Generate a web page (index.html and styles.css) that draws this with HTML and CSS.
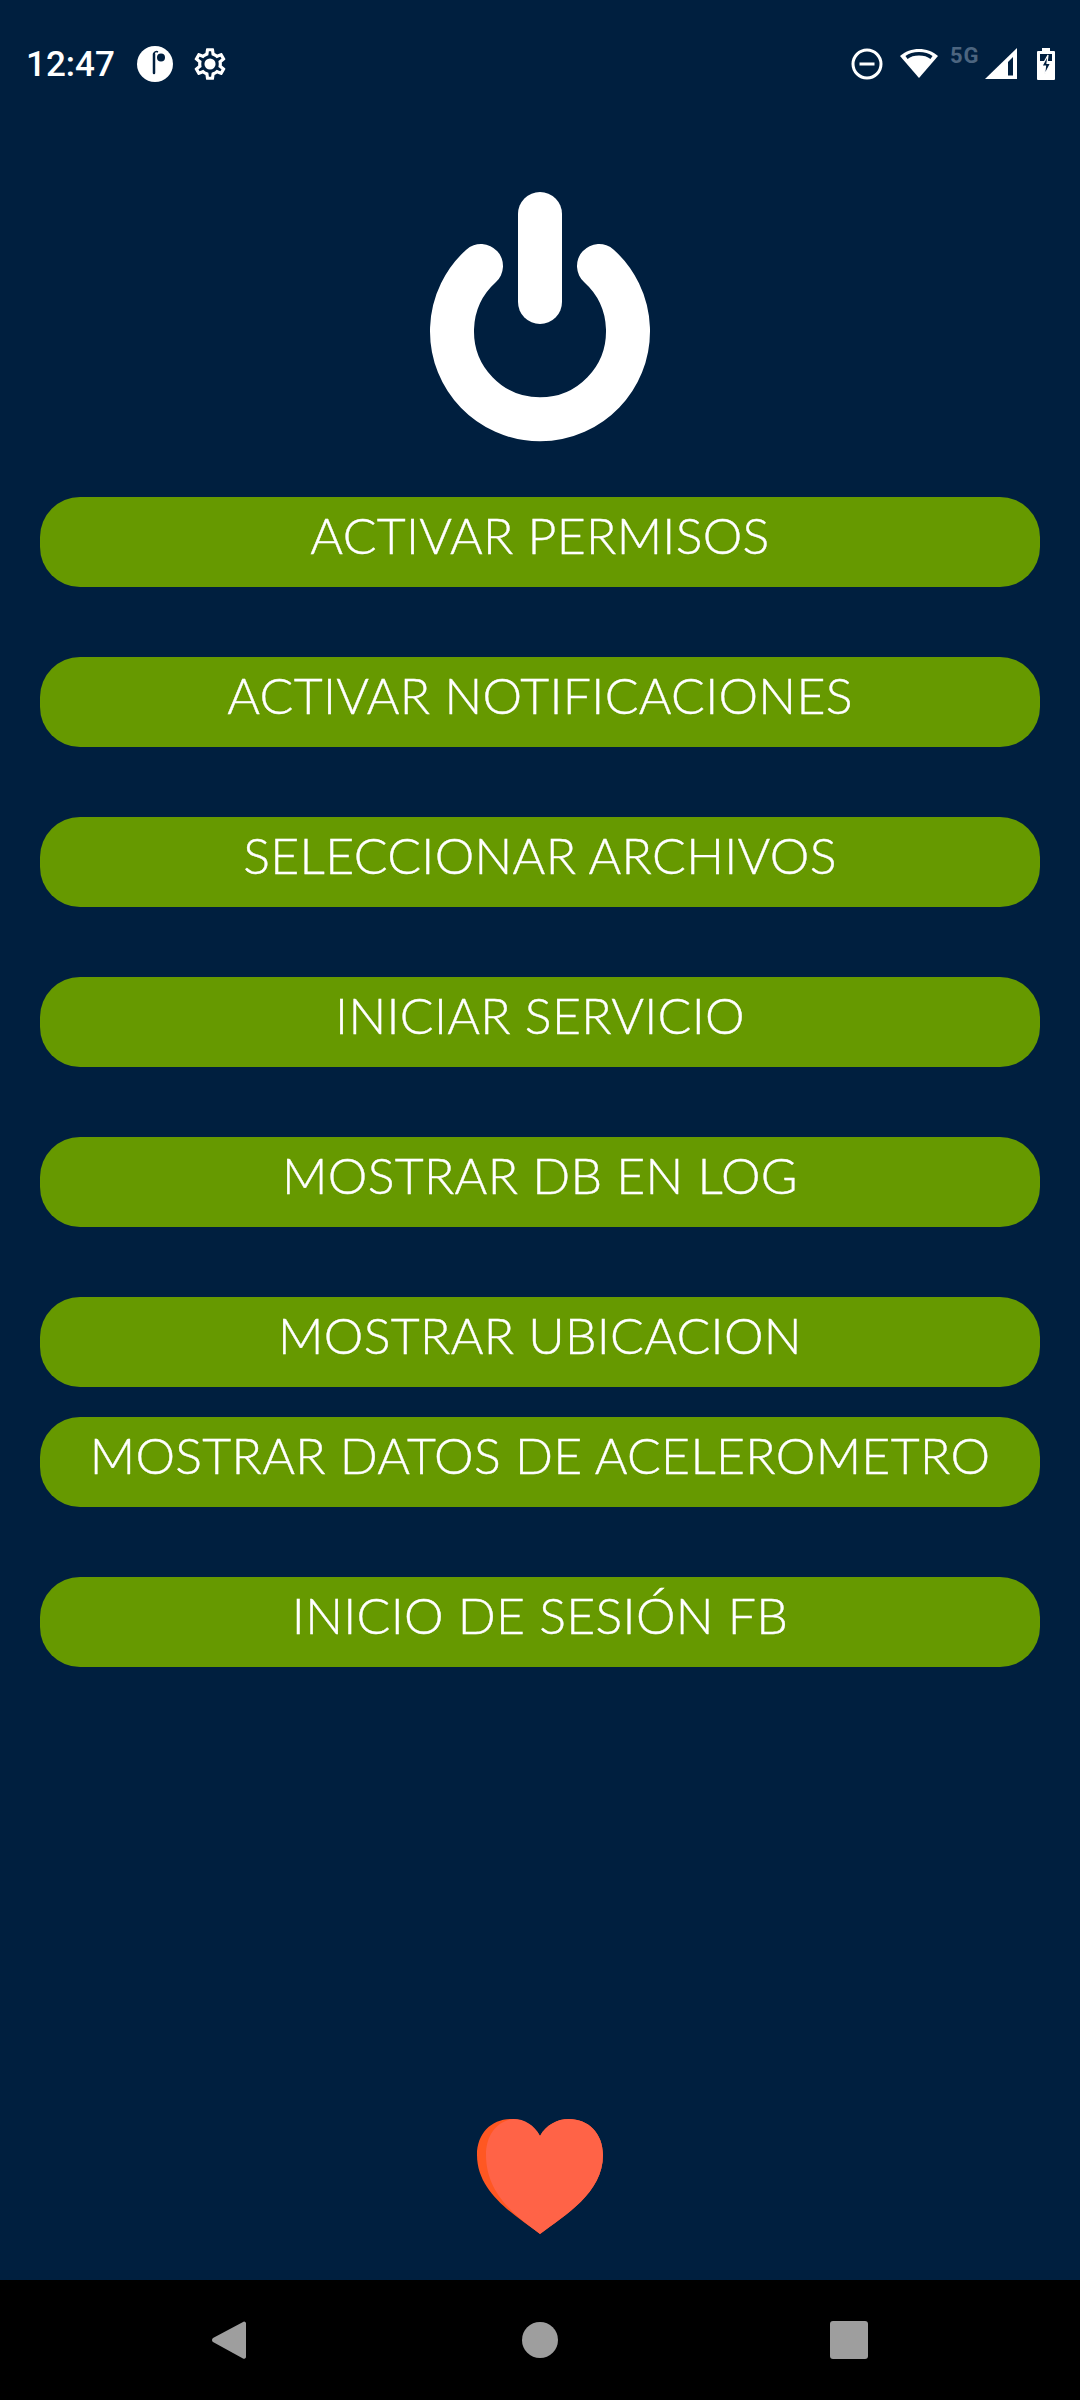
FILE: index.html
```html
<!DOCTYPE html>
<html lang="es">
<head>
  <meta charset="UTF-8" />
  <title>Inicio</title>
  <link rel="stylesheet" href="styles.css">
</head>
<body>
  <div class="pantalla">
    <div class="status-bar">
      <span class="hora">12:47</span>
      <svg class="ic-app" width="36" height="36" viewBox="0 0 36 36">
        <circle cx="18" cy="18" r="18" fill="#fff"/>
        <path d="M17 8V27" stroke="#001f3f" stroke-width="2.500" stroke-linecap="round" fill="none"/>
        <path d="M17 8C17 6 19 5 21 6" stroke="#001f3f" stroke-width="1.500" fill="none"/>
        <circle cx="24" cy="11.500" r="4" fill="#001f3f"/>
      </svg>
      <svg class="ic-gear" width="38" height="38" viewBox="0 0 24 24">
        <path d="M19.430 12.980c.04-.32.07-.64.07-.98 0-.34-.03-.66-.07-.98l2.110-1.650c.19-.15.24-.42.12-.64l-2-3.460c-.09-.16-.26-.25-.44-.25-.06 0-.12.01-.17.03l-2.490 1c-.52-.4-1.080-.73-1.690-.98l-.38-2.650C14.460 2.180 14.250 2 14 2h-4c-.25 0-.46.18-.49.42l-.38 2.650c-.61.25-1.170.59-1.690.98l-2.490-1c-.06-.02-.12-.03-.18-.03-.17 0-.34.09-.43.25l-2 3.460c-.13.22-.07.49.12.64l2.110 1.650c-.04.32-.07.65-.07.98 0 .33.03.66.07.98l-2.110 1.650c-.19.15-.24.42-.12.64l2 3.460c.09.16.26.25.44.25.06 0 .12-.01.17-.03l2.490-1c.52.4 1.080.73 1.690.98l.38 2.650c.03.24.24.42.49.42h4c.25 0 .46-.18.49-.42l.38-2.650c.61-.25 1.170-.59 1.690-.98l2.490 1c.06.02.12.03.18.03.17 0 .34-.09.43-.25l2-3.460c.12-.22.07-.49-.12-.64l-2.110-1.650zm-1.980-1.710c.04.31.05.52.05.73 0 .21-.02.43-.05.73l-.14 1.130.89.7 1.080.84-.7 1.210-1.270-.51-1.040-.42-.9.68c-.43.32-.84.56-1.250.73l-1.060.43-.16 1.130-.2 1.350h-1.400l-.19-1.350-.16-1.130-1.060-.43c-.43-.18-.83-.41-1.230-.71l-.91-.7-1.060.43-1.270.51-.7-1.210 1.080-.84.89-.7-.14-1.130c-.03-.31-.05-.54-.05-.74s.02-.43.05-.73l.14-1.130-.89-.7-1.080-.84.7-1.210 1.270.51 1.040.42.9-.68c.43-.32.84-.56 1.250-.73l1.060-.43.16-1.130.2-1.350h1.390l.19 1.350.16 1.130 1.060.43c.43.18.83.41 1.230.71l.91.7 1.060-.43 1.270-.51.7 1.210-1.070.85-.89.7.14 1.130z" fill="#fff"/>
        <circle cx="12" cy="12" r="3.500" fill="#fff"/>
      </svg>
      <div class="status-der">
        <svg width="32" height="32" viewBox="0 0 32 32">
          <circle cx="16" cy="16" r="14" fill="none" stroke="#fff" stroke-width="3"/>
          <rect x="8.500" y="14.500" width="15" height="3" fill="#fff"/>
        </svg>
        <svg class="ic-wifi" width="38" height="32" viewBox="0 0 38 32">
          <path d="M19 31 0 9C10-.5 28-.5 38 9z" fill="#fff"/>
          <path d="M6.500 10.500C13 5.500 25 5.500 31.500 10.500" fill="none" stroke="#001f3f" stroke-width="3.500"/>
        </svg>
        <span class="red">5G</span>
        <svg class="ic-senal" width="32" height="32" viewBox="0 0 32 32">
          <path d="M0 31 32 0v31z" fill="#fff"/>
          <path d="M23 14 28 9V27.500H23z" fill="#001f3f"/>
        </svg>
        <svg class="ic-bateria" width="18" height="32" viewBox="0 0 18 32">
          <path d="M5 0h8v3h4a1 1 0 0 1 1 1v27a1 1 0 0 1-1 1H1a1 1 0 0 1-1-1V4a1 1 0 0 1 1-1h4z" fill="#fff"/>
          <rect x="3" y="6" width="12" height="7" fill="#001f3f"/>
          <path d="M11 7 5 18h3.500L7.500 27 13.500 15.500H10z" fill="#001f3f" stroke="#fff" stroke-width="1.200"/>
        </svg>
      </div>
    </div>

    <div class="contenido">
      <svg class="ic-power" width="224" height="252" viewBox="0 0 224 252">
        <path d="M53 74a88 88 0 1 0 118 0" fill="none" stroke="#fff" stroke-width="44" stroke-linecap="round"/>
        <path d="M112 22v88" fill="none" stroke="#fff" stroke-width="44" stroke-linecap="round"/>
      </svg>

      <div class="botones">
        <button class="boton">ACTIVAR PERMISOS</button>
        <button class="boton">ACTIVAR NOTIFICACIONES</button>
        <button class="boton">SELECCIONAR ARCHIVOS</button>
        <button class="boton">INICIAR SERVICIO</button>
        <button class="boton">MOSTRAR DB EN LOG</button>
        <button class="boton">MOSTRAR UBICACION</button>
        <button class="boton boton-pegado">MOSTRAR DATOS DE ACELEROMETRO</button>
        <button class="boton">INICIO DE SESIÓN FB</button>
      </div>

      <svg class="ic-corazon" width="126" height="115" viewBox="0 0 126 115">
        <path d="M63 115C38 96 0 74 0 36 0 14 15 0 34 0c12 0 23 6 29 17C69 6 80 0 92 0c19 0 34 14 34 36 0 38-38 60-63 79z" fill="#ff5722"/>
        <path d="M63 115C44 100 9 78 9 36 9 16 20 2 36 0c12 0 21 6 27 17C69 6 80 0 92 0c19 0 34 14 34 36 0 38-38 60-63 79z" fill="#ff6347"/>
      </svg>
    </div>

    <div class="nav-bar">
      <svg width="36" height="40" viewBox="0 0 36 40">
        <path d="M33 1.500a2 2 0 0 1 2 1.500v34a2 2 0 0 1-3 1.500L2 22a2.500 2.500 0 0 1 0-4z" fill="#9e9e9e"/>
      </svg>
      <span class="nav-circulo"></span>
      <span class="nav-cuadro"></span>
    </div>
  </div>
</body>
</html>
```

FILE: styles.css
```css
body {
  margin: 0;
  font-family: "Lato", sans-serif;
}
.pantalla {
  width: 1080px;
  height: 2400px;
  display: flex;
  flex-direction: column;
  background: #001f3f;
  overflow: hidden;
}
.status-bar {
  height: 128px;
  flex-shrink: 0;
  display: flex;
  align-items: center;
  padding: 0 25px 0 26px;
  color: #fff;
}
.hora {
  font-family: "Roboto", sans-serif;
  font-size: 35px;
  font-weight: 500;
}
.ic-app {
  margin-left: 22px;
}
.ic-gear {
  margin-left: 18px;
}
.status-der {
  margin-left: auto;
  display: flex;
  align-items: center;
}
.ic-wifi {
  margin: -2px 0 0 17px;
}
.red {
  font-family: "Roboto", sans-serif;
  font-size: 22px;
  font-weight: 700;
  letter-spacing: 1px;
  color: #4c6580;
  width: 35px;
  margin: -17px 0 0 12px;
}
.ic-bateria {
  margin-left: 20px;
}
.contenido {
  flex: 1;
  display: flex;
  flex-direction: column;
  align-items: center;
}
.ic-power {
  flex-shrink: 0;
  margin-top: 64px;
}
.botones {
  width: 1000px;
  margin-top: 53px;
  display: flex;
  flex-direction: column;
  gap: 70px;
}
.boton {
  height: 90px;
  padding: 0 0 14px;
  background: #669900;
  color: #fff;
  border: none;
  border-radius: 40px;
  font-family: "Lato", sans-serif;
  font-size: 50px;
  font-weight: 300;
  letter-spacing: 0.3px;
  -webkit-text-stroke: 0.4px #fff;
  white-space: nowrap;
}
.boton-pegado {
  margin-top: -40px;
}
.ic-corazon {
  flex-shrink: 0;
  margin-top: auto;
  margin-bottom: 46px;
}
.nav-bar {
  height: 120px;
  flex-shrink: 0;
  background: #000;
  display: flex;
  align-items: center;
  padding-left: 211px;
}
.nav-circulo {
  width: 36px;
  height: 36px;
  margin-left: 275px;
  background: #9e9e9e;
  border-radius: 50%;
}
.nav-cuadro {
  width: 38px;
  height: 38px;
  margin-left: 272px;
  background: #9e9e9e;
  border-radius: 3px;
}
```
